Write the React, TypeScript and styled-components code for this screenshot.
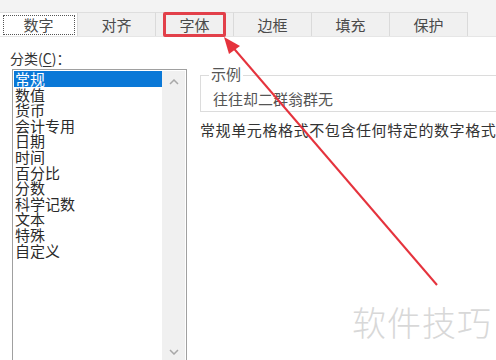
import React from "react";
import styled, { createGlobalStyle } from "styled-components";

const tabs = ["数字", "对齐", "字体", "边框", "填充", "保护"];
const categories = [
  "常规",
  "数值",
  "货币",
  "会计专用",
  "日期",
  "时间",
  "百分比",
  "分数",
  "科学记数",
  "文本",
  "特殊",
  "自定义",
];

const App = () => {
  return (
    <>
      <GlobalStyle />
      <Page>
        <TabStrip>
          {tabs.map((t, i) => (
            <Tab key={t} active={i === 0} marked={t === "字体"}>
              {i === 0 ? <FocusRect>{t}</FocusRect> : t}
            </Tab>
          ))}
        </TabStrip>
        <Body>
          <LeftColumn>
            <Label>
              分类(<u>C</u>)：
            </Label>
            <ListBox>
              <Items>
                {categories.map((c, i) => (
                  <Item key={c} selected={i === 0}>
                    {c}
                  </Item>
                ))}
              </Items>
              <ScrollBar>
                <Chevron viewBox="0 0 10 6">
                  <path d="M1 5 L5 1 L9 5" />
                </Chevron>
                <Chevron viewBox="0 0 10 6">
                  <path d="M1 1 L5 5 L9 1" />
                </Chevron>
              </ScrollBar>
            </ListBox>
          </LeftColumn>
          <RightColumn>
            <GroupBox>
              <Legend>示例</Legend>
              <Sample>往往却二群翁群无</Sample>
            </GroupBox>
            <Description>常规单元格格式不包含任何特定的数字格式。</Description>
          </RightColumn>
        </Body>
        <Arrow width="496" height="360" viewBox="0 0 496 360">
          <line x1="437" y1="285" x2="230" y2="44" stroke="#e5333d" strokeWidth="2" />
          <path d="M224 37 L240 46 L229 54 Z" fill="#e5333d" />
        </Arrow>
        <Watermark>软件技巧</Watermark>
      </Page>
    </>
  );
};

const GlobalStyle = createGlobalStyle`
  body {
    margin: 0;
    background: #ffffff;
    font-family: "Noto Sans CJK SC", "Noto Sans", sans-serif;
  }
`;

const Page = styled.div`
  position: relative;
  width: 496px;
  height: 360px;
  overflow: hidden;
  background: #ffffff;
`;

const TabStrip = styled.div`
  display: flex;
  padding-top: 12px;
  background: #f3f3f3;
  border-bottom: 1px solid #e6e6e6;
`;

const Tab = styled.div<{ active?: boolean; marked?: boolean }>`
  position: relative;
  width: 78px;
  height: 24px;
  display: flex;
  align-items: center;
  justify-content: center;
  font-size: 15px;
  color: #4a4a4a;
  background: ${({ active }) => (active ? "#ffffff" : "#f0f0f0")};
  border-top: 1px solid #dedede;
  border-right: 1px solid #dadada;
  box-sizing: border-box;
  ${({ marked }) =>
    marked &&
    `
    &::after {
      content: "";
      position: absolute;
      left: 7px;
      right: 7px;
      top: -1px;
      bottom: -1px;
      border: 3px solid #e2404a;
      border-radius: 2px;
    }
  `}
`;

const FocusRect = styled.span`
  display: flex;
  align-items: center;
  justify-content: center;
  width: 72px;
  height: 20px;
  border: 1px dotted #555;
  box-sizing: border-box;
`;

const Body = styled.div`
  display: flex;
  padding-top: 12px;
`;

const LeftColumn = styled.div`
  width: 190px;
  padding-left: 10px;
  flex-shrink: 0;
`;

const Label = styled.div`
  font-size: 14px;
  line-height: 18px;
  color: #333;
  margin-bottom: 2px;
  u {
    text-underline-offset: 2px;
  }
`;

const ListBox = styled.div`
  display: flex;
  margin-left: 2px;
  width: 175px;
  height: 300px;
  border: 1px solid #a0a0a0;
  box-sizing: border-box;
  padding: 1px;
`;

const Items = styled.div`
  flex: 1;
  display: flex;
  flex-direction: column;
`;

const Item = styled.div<{ selected?: boolean }>`
  font-size: 15px;
  line-height: 15.6px;
  height: 15.6px;
  padding-left: 1px;
  color: ${({ selected }) => (selected ? "#ffffff" : "#2a2a2a")};
  background: ${({ selected }) => (selected ? "#0a78d7" : "transparent")};
  white-space: nowrap;
`;

const ScrollBar = styled.div`
  width: 23px;
  background: #f0f0f0;
  display: flex;
  flex-direction: column;
  justify-content: space-between;
  align-items: center;
  padding: 8px 0 12px;
`;

const Chevron = styled.svg`
  width: 10px;
  height: 6px;
  fill: none;
  stroke: #a8a8a8;
  stroke-width: 1.5;
`;

const RightColumn = styled.div`
  flex: 1;
  min-width: 0;
`;

const GroupBox = styled.div`
  position: relative;
  margin-top: 26px;
  height: 37px;
  border: 1px solid #dcdcdc;
  border-right: none;
  box-sizing: border-box;
`;

const Legend = styled.span`
  position: absolute;
  left: 8px;
  top: -10px;
  padding: 0 2px;
  background: #fff;
  font-size: 15px;
  line-height: 16px;
  color: #555;
`;

const Sample = styled.div`
  padding: 15px 0 0 12px;
  font-size: 15px;
  line-height: 16px;
  color: #555;
  white-space: nowrap;
`;

const Description = styled.div`
  margin-top: 10px;
  font-size: 15px;
  letter-spacing: 0.6px;
  line-height: 16px;
  color: #333;
  white-space: nowrap;
`;

const Arrow = styled.svg`
  position: absolute;
  left: 0;
  top: 0;
  pointer-events: none;
`;

const Watermark = styled.div`
  position: absolute;
  right: 4px;
  bottom: 14px;
  font-size: 34px;
  font-weight: 300;
  letter-spacing: 1px;
  color: #d8d8d8;
  pointer-events: none;
`;

export default App;
